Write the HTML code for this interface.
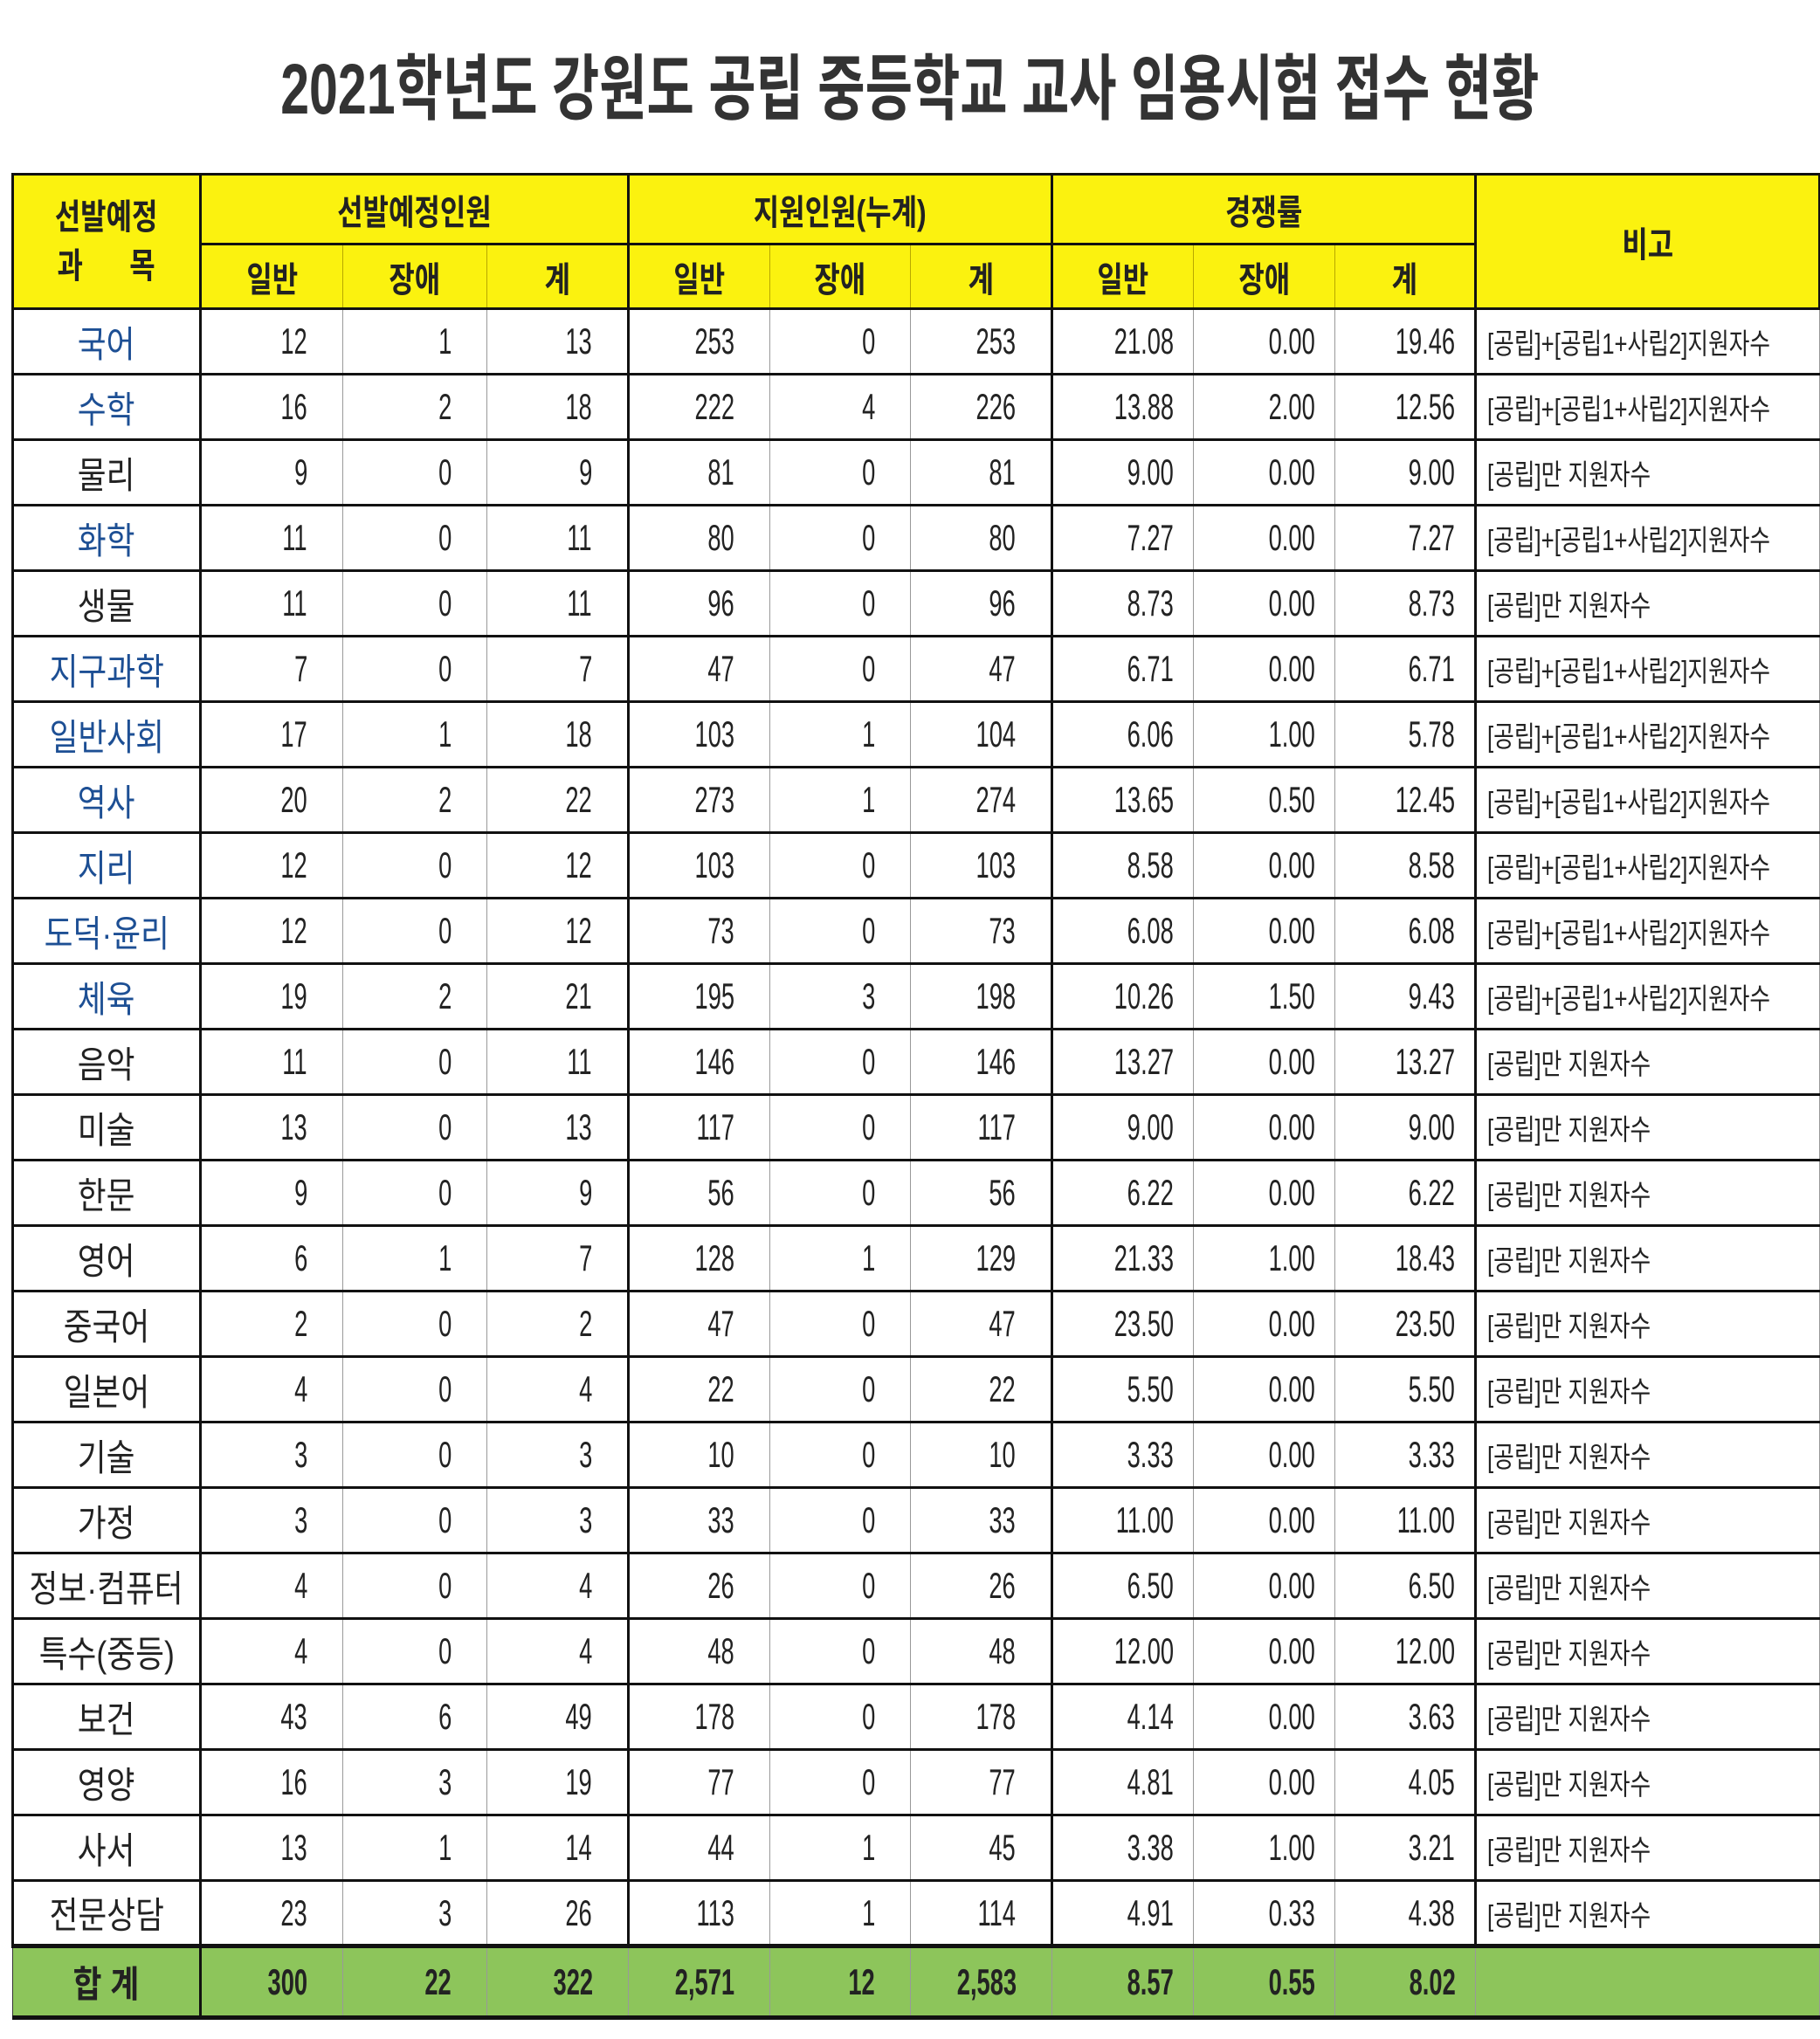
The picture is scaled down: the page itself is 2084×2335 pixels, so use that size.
<!DOCTYPE html>
<html><head><meta charset="utf-8"><style>
html,body{margin:0;padding:0;background:#fff;}
body{width:2084px;height:2335px;position:relative;overflow:hidden;font-family:"Liberation Sans","Noto Sans CJK KR",sans-serif;color:#222;}
.title{position:absolute;left:0;width:2084px;top:58px;text-align:center;font-size:82px;font-weight:bold;color:#333;line-height:90px;}
.title span{display:inline-block;transform:scaleX(0.72);}
table{position:absolute;left:13px;top:198px;border-collapse:collapse;table-layout:fixed;width:2069px;}
td{padding:0;overflow:hidden;white-space:nowrap;border:1px solid #999;}
tr{height:75px;}
td.s{text-align:center;font-size:42px;border-left:3px solid #111;border-right:3px solid #111;}
td.s span{display:inline-block;transform:scaleX(0.85);}
td.b{color:#1d4f94;}
td.n{text-align:right;font-size:42px;padding-right:40px;}
td.r{text-align:right;font-size:42px;padding-right:22px;}
td.n span,td.r span{display:inline-block;transform:scaleX(0.65);transform-origin:right center;}
td.m{font-size:33px;padding-left:12px;border-left:3px solid #111;}
td.m span{display:inline-block;transform:scaleX(0.78);transform-origin:left center;}
tr.row td{border-top:3px solid #111;border-bottom:3px solid #111;}
.g{border-left:3px solid #111 !important;}
thead td{background:#fbf20f;text-align:center;font-size:40px;color:#222;border:3px solid #111;font-weight:bold;}
thead td span{display:inline-block;transform:scaleX(0.8);}
thead td.sub{border-left:1px solid #b8a800;border-right:1px solid #b8a800;}
tr.tot td{background:#8dc55b;font-weight:bold;border-top:5px solid #111;border-bottom:5px solid #111;border-left:1px solid #333;}
</style></head><body>
<div class="title"><span>2021학년도 강원도 공립 중등학교 교사 임용시험 접수 현황</span></div>
<table>
<colgroup><col style="width:215px"><col style="width:163px"><col style="width:165px"><col style="width:162px"><col style="width:162px"><col style="width:161px"><col style="width:162px"><col style="width:162px"><col style="width:162px"><col style="width:161px"><col style="width:394px"></colgroup>
<thead>
<tr style="height:80px"><td rowspan="2" style="line-height:56px"><span>선발예정<br>과&nbsp;&nbsp;&nbsp;&nbsp;&nbsp;&nbsp;목</span></td><td colspan="3"><span>선발예정인원</span></td><td colspan="3"><span>지원인원(누계)</span></td><td colspan="3"><span>경쟁률</span></td><td rowspan="2"><span>비고</span></td></tr>
<tr style="height:74px"><td class="sub" style="border-left:3px solid #111"><span>일반</span></td><td class="sub"><span>장애</span></td><td class="sub"><span>계</span></td><td class="sub" style="border-left:3px solid #111"><span>일반</span></td><td class="sub"><span>장애</span></td><td class="sub"><span>계</span></td><td class="sub" style="border-left:3px solid #111"><span>일반</span></td><td class="sub"><span>장애</span></td><td class="sub" style="border-right:3px solid #111"><span>계</span></td></tr>
</thead>
<tbody>
<tr class="row"><td class="s b"><span>국어</span></td><td class="n"><span>12</span></td><td class="n"><span>1</span></td><td class="n"><span>13</span></td><td class="n g"><span>253</span></td><td class="n"><span>0</span></td><td class="n"><span>253</span></td><td class="r g"><span>21.08</span></td><td class="r"><span>0.00</span></td><td class="r"><span>19.46</span></td><td class="m"><span>[공립]+[공립1+사립2]지원자수</span></td></tr>
<tr class="row"><td class="s b"><span>수학</span></td><td class="n"><span>16</span></td><td class="n"><span>2</span></td><td class="n"><span>18</span></td><td class="n g"><span>222</span></td><td class="n"><span>4</span></td><td class="n"><span>226</span></td><td class="r g"><span>13.88</span></td><td class="r"><span>2.00</span></td><td class="r"><span>12.56</span></td><td class="m"><span>[공립]+[공립1+사립2]지원자수</span></td></tr>
<tr class="row"><td class="s"><span>물리</span></td><td class="n"><span>9</span></td><td class="n"><span>0</span></td><td class="n"><span>9</span></td><td class="n g"><span>81</span></td><td class="n"><span>0</span></td><td class="n"><span>81</span></td><td class="r g"><span>9.00</span></td><td class="r"><span>0.00</span></td><td class="r"><span>9.00</span></td><td class="m"><span>[공립]만 지원자수</span></td></tr>
<tr class="row"><td class="s b"><span>화학</span></td><td class="n"><span>11</span></td><td class="n"><span>0</span></td><td class="n"><span>11</span></td><td class="n g"><span>80</span></td><td class="n"><span>0</span></td><td class="n"><span>80</span></td><td class="r g"><span>7.27</span></td><td class="r"><span>0.00</span></td><td class="r"><span>7.27</span></td><td class="m"><span>[공립]+[공립1+사립2]지원자수</span></td></tr>
<tr class="row"><td class="s"><span>생물</span></td><td class="n"><span>11</span></td><td class="n"><span>0</span></td><td class="n"><span>11</span></td><td class="n g"><span>96</span></td><td class="n"><span>0</span></td><td class="n"><span>96</span></td><td class="r g"><span>8.73</span></td><td class="r"><span>0.00</span></td><td class="r"><span>8.73</span></td><td class="m"><span>[공립]만 지원자수</span></td></tr>
<tr class="row"><td class="s b"><span>지구과학</span></td><td class="n"><span>7</span></td><td class="n"><span>0</span></td><td class="n"><span>7</span></td><td class="n g"><span>47</span></td><td class="n"><span>0</span></td><td class="n"><span>47</span></td><td class="r g"><span>6.71</span></td><td class="r"><span>0.00</span></td><td class="r"><span>6.71</span></td><td class="m"><span>[공립]+[공립1+사립2]지원자수</span></td></tr>
<tr class="row"><td class="s b"><span>일반사회</span></td><td class="n"><span>17</span></td><td class="n"><span>1</span></td><td class="n"><span>18</span></td><td class="n g"><span>103</span></td><td class="n"><span>1</span></td><td class="n"><span>104</span></td><td class="r g"><span>6.06</span></td><td class="r"><span>1.00</span></td><td class="r"><span>5.78</span></td><td class="m"><span>[공립]+[공립1+사립2]지원자수</span></td></tr>
<tr class="row"><td class="s b"><span>역사</span></td><td class="n"><span>20</span></td><td class="n"><span>2</span></td><td class="n"><span>22</span></td><td class="n g"><span>273</span></td><td class="n"><span>1</span></td><td class="n"><span>274</span></td><td class="r g"><span>13.65</span></td><td class="r"><span>0.50</span></td><td class="r"><span>12.45</span></td><td class="m"><span>[공립]+[공립1+사립2]지원자수</span></td></tr>
<tr class="row"><td class="s b"><span>지리</span></td><td class="n"><span>12</span></td><td class="n"><span>0</span></td><td class="n"><span>12</span></td><td class="n g"><span>103</span></td><td class="n"><span>0</span></td><td class="n"><span>103</span></td><td class="r g"><span>8.58</span></td><td class="r"><span>0.00</span></td><td class="r"><span>8.58</span></td><td class="m"><span>[공립]+[공립1+사립2]지원자수</span></td></tr>
<tr class="row"><td class="s b"><span>도덕·윤리</span></td><td class="n"><span>12</span></td><td class="n"><span>0</span></td><td class="n"><span>12</span></td><td class="n g"><span>73</span></td><td class="n"><span>0</span></td><td class="n"><span>73</span></td><td class="r g"><span>6.08</span></td><td class="r"><span>0.00</span></td><td class="r"><span>6.08</span></td><td class="m"><span>[공립]+[공립1+사립2]지원자수</span></td></tr>
<tr class="row"><td class="s b"><span>체육</span></td><td class="n"><span>19</span></td><td class="n"><span>2</span></td><td class="n"><span>21</span></td><td class="n g"><span>195</span></td><td class="n"><span>3</span></td><td class="n"><span>198</span></td><td class="r g"><span>10.26</span></td><td class="r"><span>1.50</span></td><td class="r"><span>9.43</span></td><td class="m"><span>[공립]+[공립1+사립2]지원자수</span></td></tr>
<tr class="row"><td class="s"><span>음악</span></td><td class="n"><span>11</span></td><td class="n"><span>0</span></td><td class="n"><span>11</span></td><td class="n g"><span>146</span></td><td class="n"><span>0</span></td><td class="n"><span>146</span></td><td class="r g"><span>13.27</span></td><td class="r"><span>0.00</span></td><td class="r"><span>13.27</span></td><td class="m"><span>[공립]만 지원자수</span></td></tr>
<tr class="row"><td class="s"><span>미술</span></td><td class="n"><span>13</span></td><td class="n"><span>0</span></td><td class="n"><span>13</span></td><td class="n g"><span>117</span></td><td class="n"><span>0</span></td><td class="n"><span>117</span></td><td class="r g"><span>9.00</span></td><td class="r"><span>0.00</span></td><td class="r"><span>9.00</span></td><td class="m"><span>[공립]만 지원자수</span></td></tr>
<tr class="row"><td class="s"><span>한문</span></td><td class="n"><span>9</span></td><td class="n"><span>0</span></td><td class="n"><span>9</span></td><td class="n g"><span>56</span></td><td class="n"><span>0</span></td><td class="n"><span>56</span></td><td class="r g"><span>6.22</span></td><td class="r"><span>0.00</span></td><td class="r"><span>6.22</span></td><td class="m"><span>[공립]만 지원자수</span></td></tr>
<tr class="row"><td class="s"><span>영어</span></td><td class="n"><span>6</span></td><td class="n"><span>1</span></td><td class="n"><span>7</span></td><td class="n g"><span>128</span></td><td class="n"><span>1</span></td><td class="n"><span>129</span></td><td class="r g"><span>21.33</span></td><td class="r"><span>1.00</span></td><td class="r"><span>18.43</span></td><td class="m"><span>[공립]만 지원자수</span></td></tr>
<tr class="row"><td class="s"><span>중국어</span></td><td class="n"><span>2</span></td><td class="n"><span>0</span></td><td class="n"><span>2</span></td><td class="n g"><span>47</span></td><td class="n"><span>0</span></td><td class="n"><span>47</span></td><td class="r g"><span>23.50</span></td><td class="r"><span>0.00</span></td><td class="r"><span>23.50</span></td><td class="m"><span>[공립]만 지원자수</span></td></tr>
<tr class="row"><td class="s"><span>일본어</span></td><td class="n"><span>4</span></td><td class="n"><span>0</span></td><td class="n"><span>4</span></td><td class="n g"><span>22</span></td><td class="n"><span>0</span></td><td class="n"><span>22</span></td><td class="r g"><span>5.50</span></td><td class="r"><span>0.00</span></td><td class="r"><span>5.50</span></td><td class="m"><span>[공립]만 지원자수</span></td></tr>
<tr class="row"><td class="s"><span>기술</span></td><td class="n"><span>3</span></td><td class="n"><span>0</span></td><td class="n"><span>3</span></td><td class="n g"><span>10</span></td><td class="n"><span>0</span></td><td class="n"><span>10</span></td><td class="r g"><span>3.33</span></td><td class="r"><span>0.00</span></td><td class="r"><span>3.33</span></td><td class="m"><span>[공립]만 지원자수</span></td></tr>
<tr class="row"><td class="s"><span>가정</span></td><td class="n"><span>3</span></td><td class="n"><span>0</span></td><td class="n"><span>3</span></td><td class="n g"><span>33</span></td><td class="n"><span>0</span></td><td class="n"><span>33</span></td><td class="r g"><span>11.00</span></td><td class="r"><span>0.00</span></td><td class="r"><span>11.00</span></td><td class="m"><span>[공립]만 지원자수</span></td></tr>
<tr class="row"><td class="s"><span>정보·컴퓨터</span></td><td class="n"><span>4</span></td><td class="n"><span>0</span></td><td class="n"><span>4</span></td><td class="n g"><span>26</span></td><td class="n"><span>0</span></td><td class="n"><span>26</span></td><td class="r g"><span>6.50</span></td><td class="r"><span>0.00</span></td><td class="r"><span>6.50</span></td><td class="m"><span>[공립]만 지원자수</span></td></tr>
<tr class="row"><td class="s"><span>특수(중등)</span></td><td class="n"><span>4</span></td><td class="n"><span>0</span></td><td class="n"><span>4</span></td><td class="n g"><span>48</span></td><td class="n"><span>0</span></td><td class="n"><span>48</span></td><td class="r g"><span>12.00</span></td><td class="r"><span>0.00</span></td><td class="r"><span>12.00</span></td><td class="m"><span>[공립]만 지원자수</span></td></tr>
<tr class="row"><td class="s"><span>보건</span></td><td class="n"><span>43</span></td><td class="n"><span>6</span></td><td class="n"><span>49</span></td><td class="n g"><span>178</span></td><td class="n"><span>0</span></td><td class="n"><span>178</span></td><td class="r g"><span>4.14</span></td><td class="r"><span>0.00</span></td><td class="r"><span>3.63</span></td><td class="m"><span>[공립]만 지원자수</span></td></tr>
<tr class="row"><td class="s"><span>영양</span></td><td class="n"><span>16</span></td><td class="n"><span>3</span></td><td class="n"><span>19</span></td><td class="n g"><span>77</span></td><td class="n"><span>0</span></td><td class="n"><span>77</span></td><td class="r g"><span>4.81</span></td><td class="r"><span>0.00</span></td><td class="r"><span>4.05</span></td><td class="m"><span>[공립]만 지원자수</span></td></tr>
<tr class="row"><td class="s"><span>사서</span></td><td class="n"><span>13</span></td><td class="n"><span>1</span></td><td class="n"><span>14</span></td><td class="n g"><span>44</span></td><td class="n"><span>1</span></td><td class="n"><span>45</span></td><td class="r g"><span>3.38</span></td><td class="r"><span>1.00</span></td><td class="r"><span>3.21</span></td><td class="m"><span>[공립]만 지원자수</span></td></tr>
<tr class="row"><td class="s"><span>전문상담</span></td><td class="n"><span>23</span></td><td class="n"><span>3</span></td><td class="n"><span>26</span></td><td class="n g"><span>113</span></td><td class="n"><span>1</span></td><td class="n"><span>114</span></td><td class="r g"><span>4.91</span></td><td class="r"><span>0.33</span></td><td class="r"><span>4.38</span></td><td class="m"><span>[공립]만 지원자수</span></td></tr>
<tr class="tot" style="height:82px"><td class="s"><span>합 계</span></td><td class="n"><span>300</span></td><td class="n"><span>22</span></td><td class="n"><span>322</span></td><td class="n"><span>2,571</span></td><td class="n"><span>12</span></td><td class="n"><span>2,583</span></td><td class="r"><span>8.57</span></td><td class="r"><span>0.55</span></td><td class="r"><span>8.02</span></td><td></td></tr>
</tbody>
</table>
</body></html>
